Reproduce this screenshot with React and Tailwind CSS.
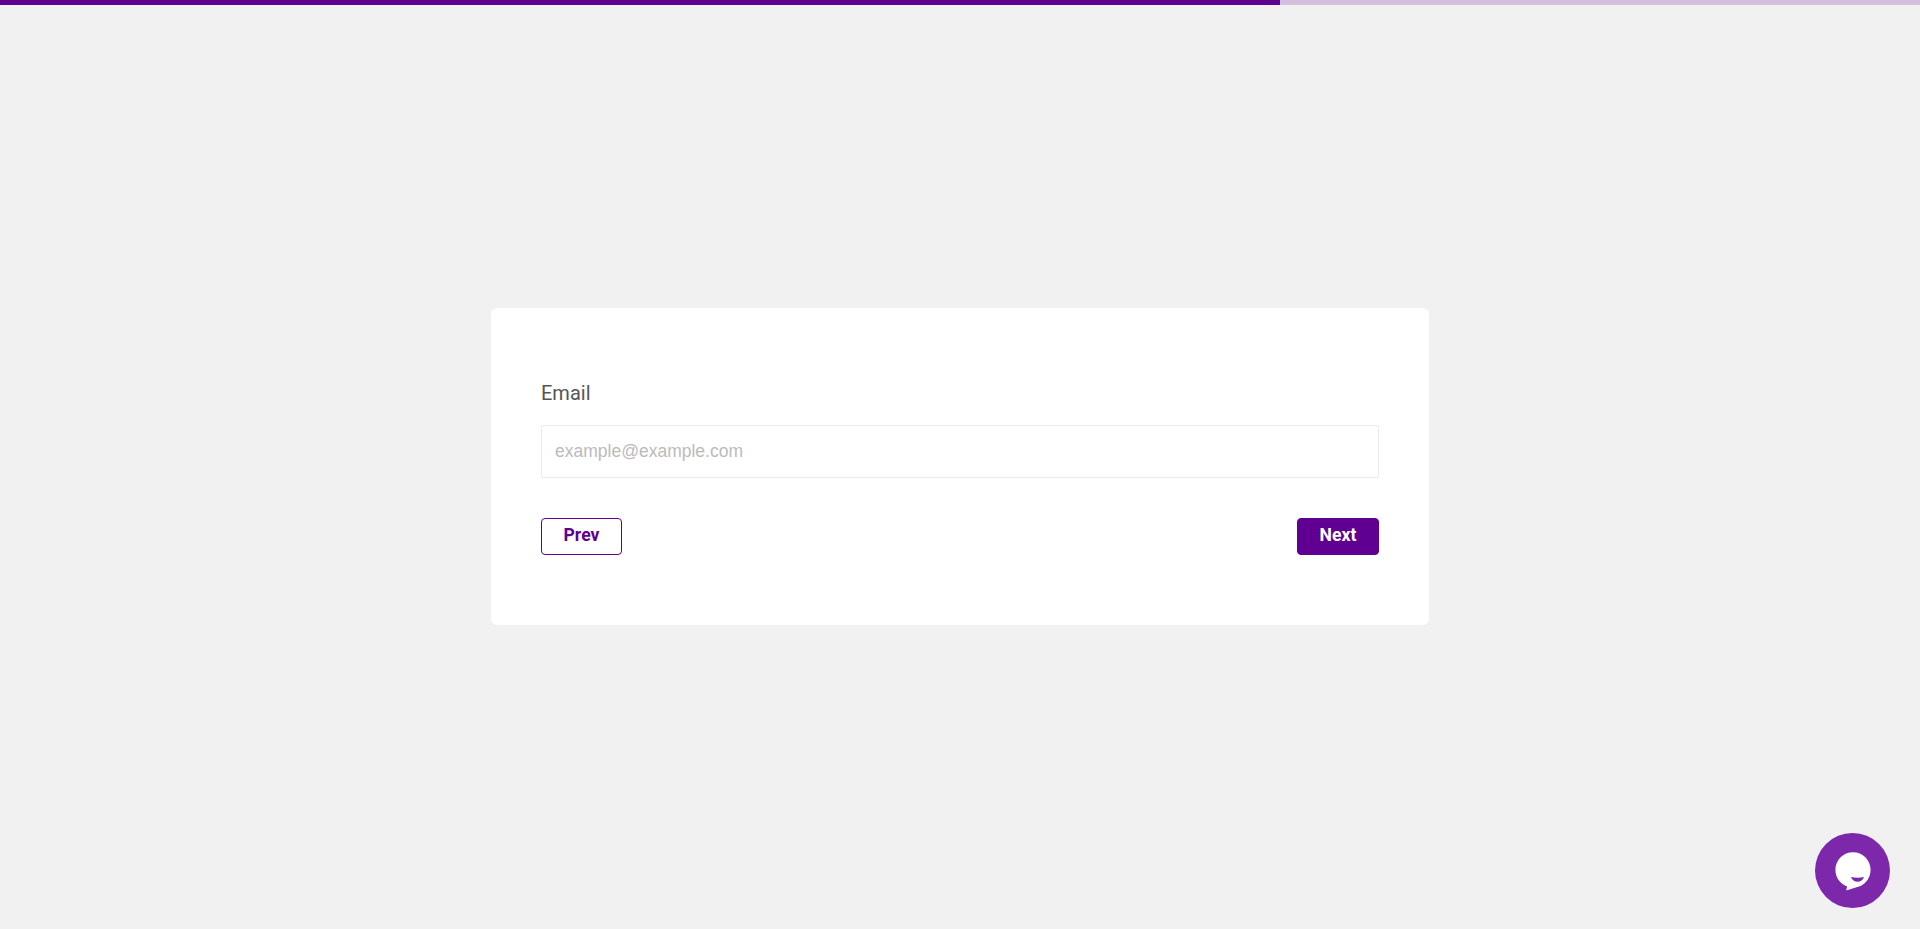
function ProgressBar() {
  return (
    <div className="h-[5px] w-full shrink-0 bg-[#d4c0de]">
      <div className="h-full w-2/3 bg-[#5f0092]" />
    </div>
  );
}

function ChatButton() {
  return (
    <button
      aria-label="Chat"
      className="fixed right-[30px] bottom-[21px] flex size-[75px] items-center justify-center rounded-full bg-[#7d27ab]"
    >
      <svg width="75" height="75" viewBox="0 0 75 75">
        <path
          d="M38 19.200C28.300 19.200 20.400 27 20.400 36.700C20.400 44.200 25 50.800 32.100 53.500L31.200 57.500L45.500 53C51.500 50.100 55.600 43.800 55.600 36.700C55.600 27 47.700 19.200 38 19.200Z"
          fill="#fff"
        />
        <path
          d="M36 44.100Q42.500 45.300 49 44.100C48 47.200 45.500 48.800 42.500 48.800C39.500 48.800 37 47.200 36 44.100Z"
          fill="#7d27ab"
        />
      </svg>
    </button>
  );
}

export default function App() {
  return (
    <div className="flex h-screen flex-col bg-[#f1f1f1] font-[Roboto,sans-serif]">
      <ProgressBar />
      <main className="flex flex-1 items-start justify-center pt-[303px]">
        <form className="h-[317px] w-[938px] rounded-md bg-white px-[50px] pt-[70px]">
          <label htmlFor="email" className="block text-[20px] leading-[30px] text-[#555]">
            Email
          </label>
          <input
            id="email"
            type="email"
            placeholder="example@example.com"
            className="mt-[17px] block h-[53px] w-full rounded-[2px] border border-[#ebebeb] bg-white px-[13px] font-['Liberation_Sans',Arial,sans-serif] text-[17.5px] placeholder:text-[#bbb]"
          />
          <div className="mt-10 flex justify-between text-[17.6px] leading-5 font-bold">
            <button
              type="button"
              className="h-[37px] w-[81px] rounded-[4px] border border-[#5f0092] pb-[3px] text-[#5f0092]"
            >
              Prev
            </button>
            <button
              type="button"
              className="h-[37px] w-[82px] rounded-[4px] border border-[#5f0092] bg-[#5f0092] pb-[3px] text-white"
            >
              Next
            </button>
          </div>
        </form>
      </main>
      <ChatButton />
    </div>
  );
}
